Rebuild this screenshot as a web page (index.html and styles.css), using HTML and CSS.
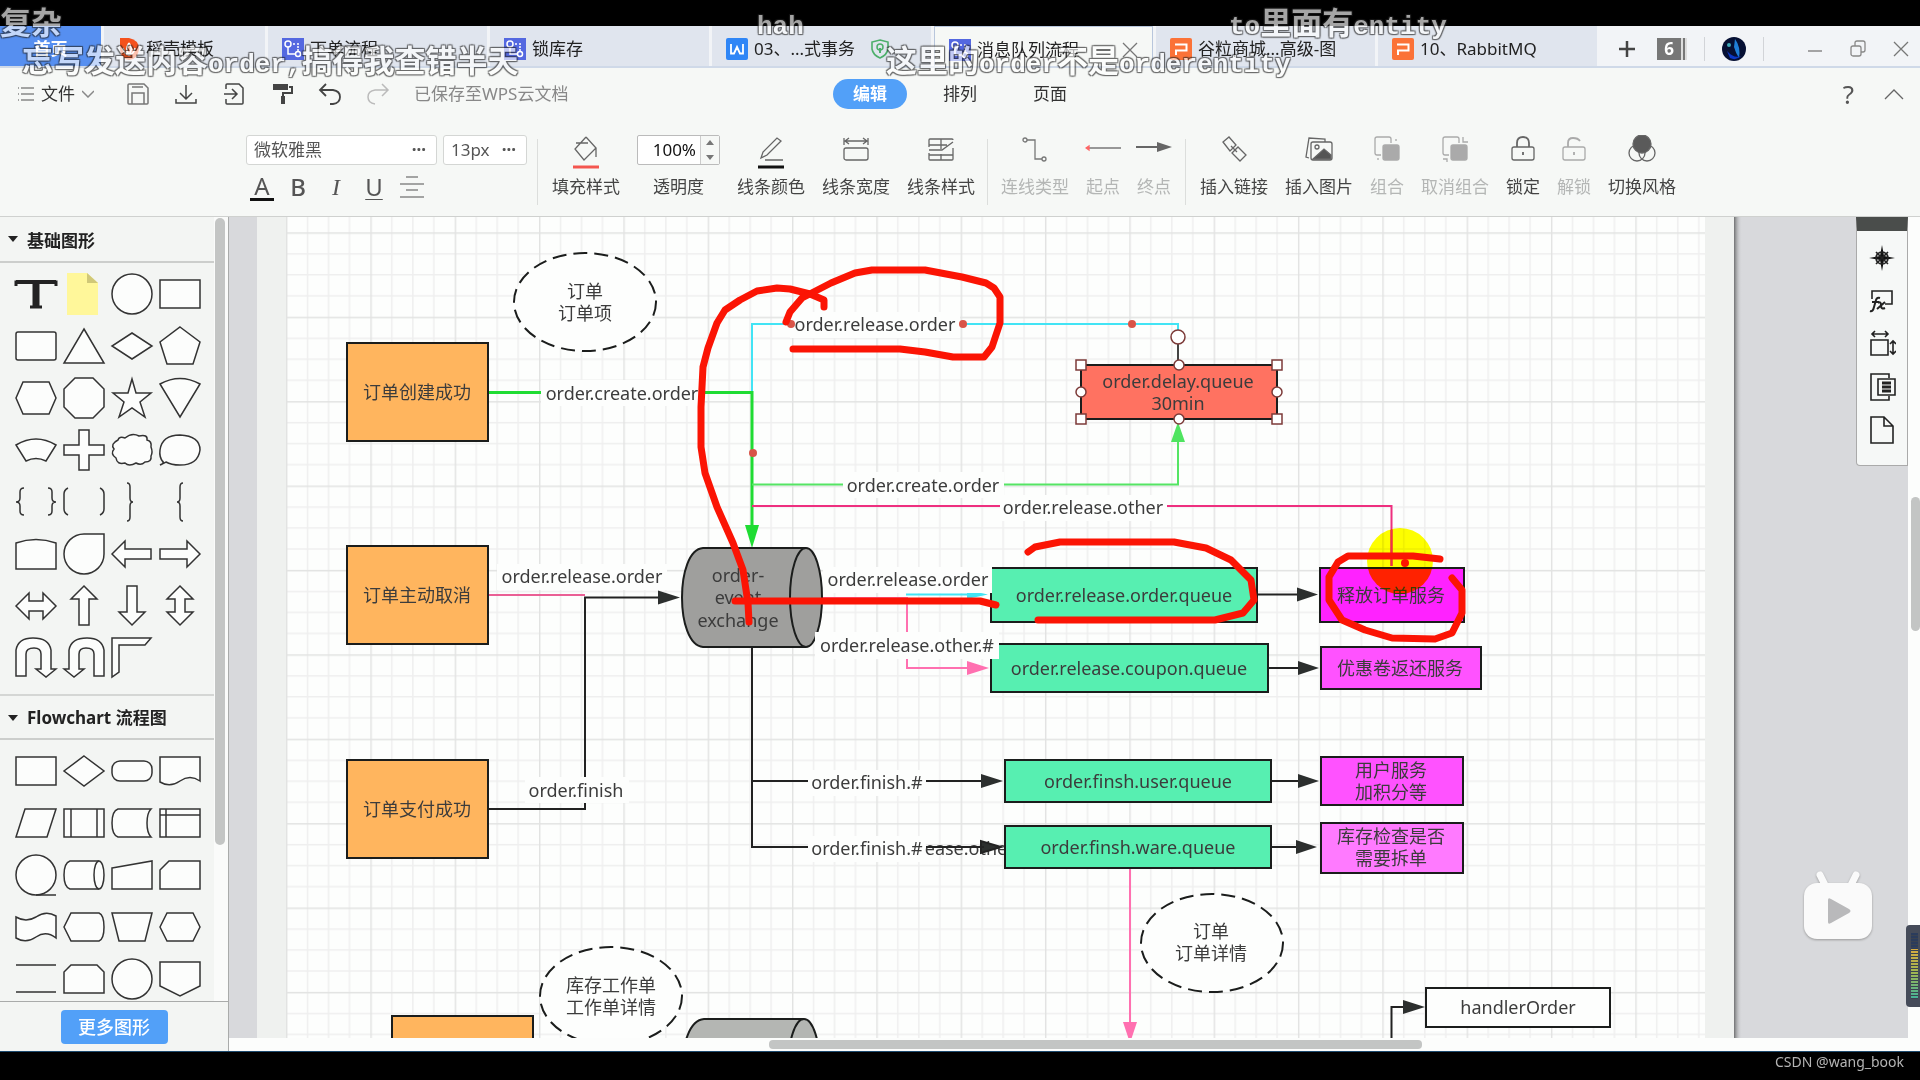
FILE: index.html
```html
<!DOCTYPE html>
<html lang="zh-CN">
<head>
<meta charset="utf-8">
<title>消息队列流程</title>
<link rel="stylesheet" href="styles.css">
</head>
<body>
<svg class="defs" aria-hidden="true">
  <symbol id="flow" viewBox="0 0 22 22"><rect width="22" height="22" fill="#5468e0"/><g fill="none" stroke="#fff" stroke-width="1.5"><circle cx="6" cy="6" r="3"/><circle cx="16" cy="16" r="2.5"/><path d="M6 9v7h7M11 6h2M15 6h2M16 8v2M16 11v2"/></g></symbol>
  <symbol id="ppt" viewBox="0 0 22 22"><rect width="22" height="22" rx="2" fill="#fb7237"/><path d="M5 6.500H16.500V12.500H6V17" fill="none" stroke="#fff" stroke-width="2"/></symbol>
</svg>

<div class="app">
  <nav class="tabs">
    <a href="#" class="tab home">首页</a>
    <a href="#" class="tab docer"><svg viewBox="0 0 22 22"><path d="M2 0H11Q21 2 21 11Q20 21 11 22Q2 20 2 11Z" fill="#f4511c"/><path d="M11 5C8 10 8 12 11 17C14 12 14 10 11 5M5 10C6 15 8 16 11 17C14 16 16 15 17 10" fill="none" stroke="#fff" stroke-width="1.600"/></svg>稻壳模板</a>
    <a href="#" class="tab"><svg><use href="#flow"/></svg>下单流程</a>
    <a href="#" class="tab"><svg><use href="#flow"/></svg>锁库存</a>
    <a href="#" class="tab"><svg viewBox="0 0 22 22"><rect width="22" height="22" rx="2" fill="#2f86f6"/><path d="M5 6V15.500H8L11 9L14 15.500H17V6" fill="none" stroke="#fff" stroke-width="1.800"/></svg>03、...式事务<svg class="shield" viewBox="0 0 18 20"><path d="M9 1L17 3V10Q16 16 9 19Q2 16 1 10V3Z" fill="none" stroke="#4caf6a" stroke-width="1.600"/><circle cx="9" cy="8" r="3" fill="none" stroke="#4caf6a" stroke-width="1.500"/><path d="M9 9V14" stroke="#4caf6a" stroke-width="2"/></svg></a>
    <a href="#" class="tab active"><svg><use href="#flow"/></svg>消息队列流程<svg class="close" viewBox="0 0 16 16"><path d="M1 1L15 15M15 1L1 15" stroke="#777" stroke-width="1.300"/></svg></a>
    <a href="#" class="tab"><svg><use href="#ppt"/></svg>谷粒商城...高级-图</a>
    <a href="#" class="tab"><svg><use href="#ppt"/></svg>10、RabbitMQ</a>
    <div class="winbar">
      <button aria-label="新建"><svg width="18" height="18" viewBox="0 0 18 18"><path d="M9 1V17M1 9H17" stroke="#444" stroke-width="2.500"/></svg></button>
      <span class="count">6</span>
      <i class="rule"></i>
      <svg width="24" height="24" viewBox="0 0 24 24"><circle cx="12" cy="12" r="12" fill="#061034"/><path d="M13 2Q19 10 17 21Q14 17 12 10Z" fill="#1f7fd8"/><path d="M5 14Q12 22 19 19Q14 24 8 21Z" fill="#0b37c8"/><circle cx="7" cy="8" r="2" fill="#3fa8b8"/></svg>
      <i class="rule"></i>
      <span class="controls">
        <button aria-label="最小化"><svg width="16" height="18" viewBox="0 0 16 18"><path d="M1 11H15" stroke="#888" stroke-width="1.500"/></svg></button>
        <button aria-label="还原"><svg width="16" height="18" viewBox="0 0 16 18" fill="none" stroke="#888" stroke-width="1.300"><rect x="1" y="6" width="10" height="10" rx="2"/><path d="M5 6V3Q5 1 7 1H13Q15 1 15 3V10Q15 12 13 12H11"/></svg></button>
        <button aria-label="关闭"><svg width="16" height="18" viewBox="0 0 16 18"><path d="M1 2L15 16M15 2L1 16" stroke="#777" stroke-width="1.300"/></svg></button>
      </span>
    </div>
  </nav>

  <div class="menu">
    <div class="quick">
      <button class="file"><svg width="16" height="16" viewBox="0 0 16 16"><path d="M0 2H1M3 2H16M0 8H1M3 8H16M0 14H1M3 14H16" stroke="#888" stroke-width="1.300"/></svg>文件<svg width="12" height="8" viewBox="0 0 12 8"><path d="M0 1L6 7L12 1" fill="none" stroke="#888"/></svg></button>
      <button aria-label="保存"><svg viewBox="0 0 24 24" stroke="#777"><path d="M2 3Q2 2 3 2H18L22 6V21Q22 22 21 22H3Q2 22 2 21ZM6 22V11H18V22M6 5H17"/></svg></button>
      <button aria-label="下载"><svg viewBox="0 0 24 24"><path d="M12 3V16M6 11L12 17L18 11M2 17V21H22V17"/></svg></button>
      <button aria-label="导出"><svg viewBox="0 0 24 24"><path d="M4 7V3Q4 2 5 2H17L21 6V21Q21 22 20 22H5Q4 22 4 21V17M2 12H15M10 7L15 12L10 17"/></svg></button>
      <button aria-label="格式刷"><svg viewBox="0 0 24 24"><path d="M3 5H18" stroke-width="6"/><path d="M19 5H22V11H13V22" stroke-width="2"/><path d="M13 14V22" stroke-width="4"/></svg></button>
      <button aria-label="撤销"><svg viewBox="0 0 24 24"><path d="M8 2L2 8L8 14M2 8H15Q22 9 22 15Q22 21 15 22H12" stroke-width="1.800"/></svg></button>
      <button aria-label="恢复"><svg viewBox="0 0 24 24" stroke="#bbb"><path d="M16 2L22 8L16 14M22 8H9Q2 9 2 15Q2 21 9 22"/></svg></button>
      <span class="saved">已保存至WPS云文档</span>
    </div>
    <div class="modes"><button class="on">编辑</button><button>排列</button><button>页面</button></div>
    <div class="help"><button aria-label="帮助">?</button><button aria-label="收起"><svg width="20" height="12" viewBox="0 0 20 12"><path d="M1 11L10 2L19 11" fill="none" stroke="#666" stroke-width="1.300"/></svg></button></div>
  </div>

  <div class="ribbon">
    <div class="fonts">
      <div class="pickers">
        <span class="pick wide"><select aria-label="字体"><option>微软雅黑</option></select></span>
        <span class="pick"><select aria-label="字号"><option>13px</option></select></span>
      </div>
      <div class="styles">
        <button class="colour">A</button><button class="bold">B</button><button class="ital">I</button><button class="under">U</button>
        <button aria-label="对齐"><svg width="24" height="24" viewBox="0 0 24 24"><path d="M6 2H18M0 9H24M6 15H18M0 22H24" stroke="#888" stroke-width="1.500"/></svg></button>
      </div>
    </div>
    <i class="bar"></i>
    <button class="tool"><svg viewBox="0 0 28 34"><path d="M14 2L3 14L12 25L24 13L14 2M4 8H16M24 13V22" /><path d="M1 32H27" stroke="#f4564f" stroke-width="3"/></svg>填充样式</button>
    <label class="tool"><span class="spin"><input type="text" value="100%"><span class="arrows"><svg width="8" height="20" viewBox="0 0 8 20"><path d="M0 5L4 0L8 5ZM0 15L4 20L8 15Z" fill="#777" stroke="none"/></svg></span></span>透明度</label>
    <button class="tool"><svg viewBox="0 0 28 34"><path d="M4 23L6 17L20 3L24 6L10 20ZM8 25H26"/><path d="M1 32H27" stroke="#111" stroke-width="3"/></svg>线条颜色</button>
    <button class="tool"><svg viewBox="0 0 28 34"><path d="M2 3V10M26 3V10M3 6H25M7 3L3 6L7 9M21 3L25 6L21 9"/><rect x="2" y="13" width="24" height="12" rx="2"/></svg>线条宽度</button>
    <button class="tool"><svg viewBox="0 0 28 34"><path d="M2 12V5Q2 4 3 4H25Q26 4 26 5M2 15H15L26 7M2 10H20M14 4V14M2 18V24Q2 25 3 25H25Q26 25 26 24V13M14 19V25M2 20H26"/></svg>线条样式</button>
    <i class="bar tight"></i>
    <button class="tool off"><svg viewBox="0 0 28 34"><g stroke="#777"><circle cx="4" cy="5" r="2"/><path d="M6 5H14V24H21"/><circle cx="23" cy="24" r="2"/></g></svg>连线类型</button>
    <button class="tool off"><svg class="long" viewBox="0 0 36 34"><path d="M2 13H36" stroke="#777" stroke-width="1.500"/><path d="M1 13L4 11V15Z" fill="#f66" stroke="#f66"/></svg>起点</button>
    <button class="tool off"><svg class="long" viewBox="0 0 36 34"><path d="M0 12H22" stroke="#666" stroke-width="2"/><path d="M21 7L36 12L21 17Z" fill="#666" stroke="none"/></svg>终点</button>
    <i class="bar"></i>
    <button class="tool"><svg viewBox="0 0 28 34"><path d="M3 7L9 2L16 10L10 16ZM12 18L18 12L26 20L20 26ZM11 11L17 17"/></svg>插入链接</button>
    <button class="tool"><svg viewBox="0 0 28 34"><path d="M4 23L1 22L4 3L20 4V7"/><rect x="6" y="7" width="21" height="18" rx="2"/><circle cx="12" cy="12" r="2"/><path d="M8 24L19 14L26 20V24Z" fill="#555"/></svg>插入图片</button>
    <button class="tool off"><svg viewBox="0 0 28 34"><path d="M8 20H4Q2 20 2 18V4Q2 2 4 2H16Q18 2 18 4V8"/><rect x="10" y="10" width="16" height="15" rx="2" fill="#aaa"/><path d="M23 4V6M5 23V25"/></svg>组合</button>
    <button class="tool off"><svg viewBox="0 0 28 34"><path d="M8 20H4Q2 20 2 18V4Q2 2 4 2H16Q18 2 18 4V8"/><rect x="10" y="10" width="16" height="15" rx="2" fill="#aaa"/><path d="M22 2V7H27M2 24H6V27"/></svg>取消组合</button>
    <button class="tool"><svg viewBox="0 0 28 34"><rect x="3" y="12" width="22" height="13" rx="2"/><path d="M8 12V8Q8 2 14 2Q20 2 20 8V12M14 17V20" stroke-width="1.800"/></svg>锁定</button>
    <button class="tool off"><svg viewBox="0 0 28 34"><rect x="3" y="12" width="22" height="13" rx="2"/><path d="M8 12V8Q8 3 13 3Q18 3 20 6M14 17V20" stroke-width="1.800"/></svg>解锁</button>
    <button class="tool"><svg viewBox="0 0 28 34"><circle cx="9" cy="18" r="8"/><circle cx="19" cy="18" r="8"/><circle cx="14" cy="9" r="9" fill="#5a5a5a"/></svg>切换风格</button>
  </div>

  <main class="work">
    <aside class="side">
      <div class="library">
        <div class="sections">
          <h2>基础图形</h2>
          <div class="shapes">
            <svg viewBox="0 0 44 44"><path d="M2 14V10H42V14M16 35H28" fill="none" stroke="#222" stroke-width="3"/><path d="M22 10V35" stroke="#222" stroke-width="7"/><path d="M2 10H42" stroke="#222" stroke-width="4"/></svg>
            <svg viewBox="0 0 44 44"><path d="M5 1H25L36 11V43H5Z" fill="#fff79a" stroke="none"/><path d="M25 1V11H36Z" fill="#d0c878" stroke="none"/></svg>
            <svg viewBox="0 0 44 44"><circle cx="22" cy="22" r="20"/></svg>
            <svg viewBox="0 0 44 44"><path d="M2 8H42V36H2Z"/></svg>
            <svg viewBox="0 0 44 44"><rect x="2" y="8" width="40" height="28" rx="2"/></svg>
            <svg viewBox="0 0 44 44"><path d="M22 5L42 39H2Z"/></svg>
            <svg viewBox="0 0 44 44"><path d="M22 9L42 22L22 35L2 22Z"/></svg>
            <svg viewBox="0 0 44 44"><path d="M22 3L42 18L35 40H9L2 18Z"/></svg>
            <svg viewBox="0 0 44 44"><path d="M9 6H35L42 22L35 38H9L2 22Z"/></svg>
            <svg viewBox="0 0 44 44"><path d="M13 2H31L42 13V31L31 42H13L2 31V13Z"/></svg>
            <svg viewBox="0 0 44 44"><path d="M22 3L26 17H41L30 26L35 41L22 32L9 41L14 26L3 17H18Z"/></svg>
            <svg viewBox="0 0 44 44"><path d="M2 8Q22 -3 42 8L22 41Z"/></svg>
            <svg viewBox="0 0 44 44"><path d="M2 17Q22 5 42 17L32 33Q22 28 12 33Z"/></svg>
            <svg viewBox="0 0 44 44"><path d="M17 2H27V17H42V27H27V42H17V27H2V17H17Z"/></svg>
            <svg viewBox="0 0 44 44"><path d="M8 12Q9 8 15 10Q22 4 29 8Q38 6 37 12Q42 13 41 19Q43 24 41 28Q42 34 35 34Q31 38 26 35Q19 39 15 35Q7 37 6 30Q0 26 4 21Q0 16 8 12Z"/></svg>
            <svg viewBox="0 0 44 44"><path d="M5 34Q1 29 2 22Q4 7 22 7Q42 8 42 22Q40 37 22 37Q13 37 8 34L2 37Q6 36 5 33"/></svg>
            <svg viewBox="0 0 44 44" class="open"><path d="M10 8Q6 8 6 12V18Q6 22 2 22Q6 22 6 26V31Q6 35 10 35M34 8Q38 8 38 12V18Q38 22 42 22Q38 22 38 26V31Q38 35 34 35"/></svg>
            <svg viewBox="0 0 44 44" class="open"><path d="M6 8Q2 10 2 14V29Q2 33 6 35M38 8Q42 10 42 14V29Q42 33 38 35"/></svg>
            <svg viewBox="0 0 44 44" class="open"><path d="M17 3Q20 3 20 7V18Q20 22 23 22Q20 22 20 26V37Q20 41 17 41"/></svg>
            <svg viewBox="0 0 44 44" class="open"><path d="M25 3Q22 3 22 7V18Q22 22 19 22Q22 22 22 26V37Q22 41 25 41"/></svg>
            <svg viewBox="0 0 44 44"><path d="M2 11Q22 4 42 11V37H2Z"/></svg>
            <svg viewBox="0 0 44 44"><path d="M22 2H42V22A20 20 0 1 1 22 2Z"/></svg>
            <svg viewBox="0 0 44 44"><path d="M2 22L15 9V17H41V27H15V35Z"/></svg>
            <svg viewBox="0 0 44 44"><path d="M42 22L29 9V17H2V27H29V35Z"/></svg>
            <svg viewBox="0 0 44 44"><path d="M2 22L15 9V17H29V9L42 22L29 35V27H15V35Z"/></svg>
            <svg viewBox="0 0 44 44"><path d="M22 2L35 15H27V41H17V15H9Z"/></svg>
            <svg viewBox="0 0 44 44"><path d="M22 41L35 28H27V2H17V28H9Z"/></svg>
            <svg viewBox="0 0 44 44"><path d="M22 2L35 15H27V28H35L22 41L9 28H17V15H9Z"/></svg>
            <svg viewBox="0 0 44 44"><path d="M2 40V14Q4 2 19 2Q35 2 37 14V33H42L32 41L22 33H27V18Q27 12 20 12Q12 12 12 18V40Z"/></svg>
            <svg viewBox="0 0 44 44"><path d="M42 40V14Q40 2 25 2Q9 2 7 14V33H2L12 41L22 33H17V18Q17 12 24 12Q32 12 32 18V40Z"/></svg>
            <svg viewBox="0 0 44 44"><path d="M2 41V2H41L35 9H9V36Z"/></svg>
          </div>
          <h2>Flowchart 流程图</h2>
          <div class="shapes">
            <svg viewBox="0 0 44 44"><path d="M2 8H42V36H2Z"/></svg>
            <svg viewBox="0 0 44 44"><path d="M22 7L42 22L22 37L2 22Z"/></svg>
            <svg viewBox="0 0 44 44"><rect x="2" y="12" width="40" height="20" rx="8"/></svg>
            <svg viewBox="0 0 44 44"><path d="M2 8H42V32Q32 25 22 32Q12 39 2 33Z"/></svg>
            <svg viewBox="0 0 44 44"><path d="M11 8H42L33 36H2Z"/></svg>
            <svg viewBox="0 0 44 44"><path d="M2 8H42V36H2ZM9 8V36M35 8V36"/></svg>
            <svg viewBox="0 0 44 44"><path d="M41 8H8Q2 10 2 22Q2 34 8 36H41Q37 32 37 22Q37 12 41 8Z"/></svg>
            <svg viewBox="0 0 44 44"><path d="M2 8H42V36H2ZM8 8V36M2 14H42"/></svg>
            <svg viewBox="0 0 44 44"><circle cx="22" cy="22" r="20"/><path d="M22 42H42"/></svg>
            <svg viewBox="0 0 44 44"><path d="M37 8H8Q2 10 2 22Q2 34 8 36H37"/><ellipse cx="37" cy="22" rx="5" ry="14"/></svg>
            <svg viewBox="0 0 44 44"><path d="M2 15L42 8V36H2Z"/></svg>
            <svg viewBox="0 0 44 44"><path d="M11 8H42V36H2V17Z"/></svg>
            <svg viewBox="0 0 44 44"><path d="M2 12Q12 18 22 12Q32 5 42 11V33Q32 25 22 32Q12 39 2 33Z"/></svg>
            <svg viewBox="0 0 44 44"><path d="M9 8H37Q42 10 42 22Q42 34 37 36H9L2 22Z"/></svg>
            <svg viewBox="0 0 44 44"><path d="M2 8H42L35 36H9Z"/></svg>
            <svg viewBox="0 0 44 44"><path d="M9 8H35L42 22L35 36H9L2 22Z"/></svg>
            <svg viewBox="0 0 44 44" class="open"><path d="M2 8H42M2 35H42"/></svg>
            <svg viewBox="0 0 44 44"><path d="M9 8H35L42 15V36H2V15Z"/></svg>
            <svg viewBox="0 0 44 44"><circle cx="22" cy="22" r="20"/></svg>
            <svg viewBox="0 0 44 44"><path d="M2 5H42V29L22 39L2 29Z"/></svg>
          </div>
        </div>
        <div class="vtrack"><i></i></div>
      </div>
      <div class="more"><button>更多图形</button></div>
    </aside>

    <section class="stage">
      <div class="view">
        <svg class="diagram">
          <defs>
            <pattern id="grid" x="286" y="232.300" width="84.330" height="84.400" patternUnits="userSpaceOnUse">
              <path d="M21.500 0V85M42.500 0V85M63.500 0V85M0 21.500H85M0 42.500H85M0 63.500H85" stroke="#efefef" stroke-width="1.500"/>
              <path d="M.7 0V85M0 .7H85" stroke="#e2e3e2" stroke-width="1.500"/>
            </pattern>
            <linearGradient id="edge"><stop offset="0" stop-color="#6f7071"/><stop offset="1" stop-color="#d8d9dc" stop-opacity="0"/></linearGradient>
          </defs>
          <g transform="translate(-229 -217)">
            <rect x="257" y="210" width="1477" height="900" fill="#eff1ef"/>
            <rect x="1734" y="210" width="8" height="900" fill="url(#edge)"/>
            <rect x="286" y="210" width="1419" height="900" fill="#fdfefd"/>
            <rect x="286" y="210" width="1419" height="900" fill="url(#grid)"/>

            <g class="wire">
              <path d="M752 392V324H1178V337" stroke="#42e4f5"/>
              <path d="M488 392.500H752V526" stroke="#1fdc33" stroke-width="3"/>
              <path d="M752 484.500H1178V440" stroke="#55e564"/>
              <path d="M752 506H1391.500V566" stroke="#ee2f7f"/>
              <path d="M488 595H585" stroke="#ea5f95"/>
              <path d="M488 809H585V597.500H660"/>
              <path d="M752 648V847H984M752 781H984"/>
              <path d="M822 598H907V668H968" stroke="#ff70b0"/>
              <path d="M906 594.500H970" stroke="#42e4f5"/>
              <path d="M1257 594.500H1300M1268 668H1300M1271 781H1300M1271 847H1300"/>
              <path d="M1130 869V1022" stroke="#ff70b0"/>
              <path d="M1391.500 1045V1007H1406"/>
              <path d="M1178 344V362" stroke="#444"/>
            </g>
            <g class="heads">
              <path d="M745 525H759L752 548Z" fill="#1fdc33"/>
              <path d="M1171 442H1185L1178 422Z" fill="#4fe460"/>
              <path d="M658 590.500V604.500L680 597.500Z"/>
              <path d="M967 590L988 594.500L967 599Z" fill="#42e4f5"/>
              <path d="M967 661V675L989 668Z" fill="#ff70b0"/>
              <path d="M981 774V788L1003 781ZM1297 587.500V601.500L1318 594.500ZM1298 661V675L1319 668ZM1298 774V788L1319 781ZM1296 840V854L1317 847ZM1403 1000V1014L1425 1007Z"/>
              <path d="M1123 1022H1137L1130 1043Z" fill="#ff70b0"/>
            </g>

            <g class="box">
              <g fill="#ffb55e"><rect x="347" y="343" width="141" height="98"/><rect x="347" y="546" width="141" height="98"/><rect x="347" y="760" width="141" height="98"/><rect x="392" y="1016" width="141" height="98"/></g>
              <g fill="#9f9f9d"><path d="M806 548H703C675 550 675 645 703 647H806"/><ellipse cx="806" cy="597.500" rx="16" ry="49.500"/></g>
              <g fill="#b4b6b3"><path d="M804 1019H704C675 1021 675 1116 704 1118H804"/><ellipse cx="804" cy="1068" rx="16" ry="49"/></g>
              <g fill="#fdfefd" stroke-dasharray="14 7"><ellipse cx="585" cy="302" rx="71" ry="49"/><ellipse cx="1212" cy="943" rx="71" ry="49"/><ellipse cx="611" cy="996" rx="71" ry="49"/></g>
              <g fill="#57efb1"><rect x="991" y="568" width="266" height="54"/><rect x="991" y="644" width="277" height="48"/><rect x="1005" y="760" width="266" height="42"/></g>
              <rect x="1320" y="568" width="144" height="54" fill="#ff22ff"/>
              <g fill="#ff52ff"><rect x="1321" y="647" width="160" height="42"/><rect x="1321" y="757" width="142" height="48"/></g>
              <rect x="1321" y="823" width="142" height="50" fill="#ff7aff"/>
              <rect x="1081" y="365" width="196" height="54" fill="#ff7261"/>
              <rect x="1426" y="988" width="184" height="39" fill="#fdfefd"/>
            </g>

            <g fill="#fdfefd">
              <rect x="541" y="380" width="162" height="26"/><rect x="790" y="312" width="170" height="26"/><rect x="843" y="472" width="161" height="26"/>
              <rect x="1000" y="495" width="167" height="26"/><rect x="497" y="564" width="170" height="26"/><rect x="823" y="567" width="169" height="26"/>
              <rect x="815" y="632" width="184" height="27"/><rect x="525" y="777" width="104" height="26"/><rect x="808" y="770" width="118" height="26"/><rect x="808" y="836" width="118" height="26"/>
            </g>
            <g class="label mid">
              <text x="585" y="298">订单</text><text x="585" y="320">订单项</text>
              <text x="417" y="399">订单创建成功</text><text x="417" y="602">订单主动取消</text><text x="417" y="816">订单支付成功</text>
              <text x="622" y="400">order.create.order</text><text x="875" y="331">order.release.order</text>
              <text x="1178" y="388">order.delay.queue</text><text x="1178" y="410">30min</text>
              <text x="923" y="492">order.create.order</text><text x="1083" y="514">order.release.other</text>
              <text x="582" y="583">order.release.order</text><text x="908" y="586">order.release.order</text>
              <text x="738" y="582">order-</text><text x="738" y="604">event</text><text x="738" y="627">exchange</text>
              <text x="1124" y="602">order.release.order.queue</text><text x="1129" y="675">order.release.coupon.queue</text>
              <text x="907" y="652">order.release.other.#</text><text x="576" y="797">order.finish</text>
              <text x="867" y="789">order.finish.#</text><text x="867" y="855">order.finish.#</text><text x="966" y="855">ease.othe</text>
              <text x="1391" y="602">释放订单服务</text><text x="1400" y="675">优惠卷返还服务</text>
              <text x="1391" y="777">用户服务</text><text x="1391" y="799">加积分等</text><text x="1391" y="843">库存检查是否</text><text x="1391" y="865">需要拆单</text>
              <text x="1211" y="938">订单</text><text x="1211" y="960">订单详情</text><text x="611" y="992">库存工作单</text><text x="611" y="1014">工作单详情</text>
              <text x="1518" y="1014">handlerOrder</text>
            </g>
            <path class="dark" d="M926 847H984M981 841V853L1001 847Z"/>
            <g class="box"><rect x="1005" y="826" width="266" height="42" fill="#57efb1"/></g>
            <g class="label mid"><text x="1138" y="788">order.finsh.user.queue</text><text x="1138" y="854">order.finsh.ware.queue</text></g>

            <g fill="#d95448"><circle cx="791" cy="324" r="4"/><circle cx="963" cy="324" r="4"/><circle cx="1132" cy="324" r="4"/><circle cx="753" cy="453" r="4"/></g>
            <g class="handle">
              <circle cx="1178" cy="337" r="7"/>
              <rect x="1076" y="360" width="10" height="10"/><rect x="1272" y="360" width="10" height="10"/><rect x="1076" y="414" width="10" height="10"/><rect x="1272" y="414" width="10" height="10"/>
              <circle cx="1179" cy="365" r="5"/><circle cx="1179" cy="419" r="5"/><circle cx="1081" cy="392" r="5"/><circle cx="1277" cy="392" r="5"/>
            </g>
            <circle class="spot" cx="1400" cy="561" r="33"/>
            <path d="M1391.500 530V566" stroke="#ee2f4f" stroke-width="2"/>
            <circle cx="1405" cy="563" r="4" fill="#ff1400"/>
            <g class="pen">
              <path d="M824 307V300L810 294L790 289L777 288L757 291L740 300L725 310L717 323L708 348L703 367L701 407V447L705 473L717 507L733 543L743 570L748 603L749 622"/>
              <path d="M786 322L790 312L802 298L831 283L855 273L872 270H925L962 277L986 283L994 288L1000 297V323L992 347L984 357H953L925 352L900 349H793"/>
              <path d="M735 601H980L996 605"/>
              <path d="M1028 552L1035 547L1060 542H1174L1206 548L1231 560L1251 580L1254 600L1243 613L1215 620H1038"/>
              <path d="M1440 559L1413 556H1348L1338 562L1329 577V600L1342 620L1365 630L1392 638L1435 639L1452 633L1462 613V590L1452 578"/>
            </g>
          </g>
        </svg>
        <div class="panel">
          <button aria-label="导航"><svg viewBox="0 0 28 28"><path d="M14 1L16 12L27 14L16 16L14 27L12 16L1 14L12 12Z" fill="#111" stroke="none"/><circle cx="14" cy="14" r="6"/><path d="M8 8L20 20M20 8L8 20"/></svg></button>
          <button aria-label="公式"><svg viewBox="0 0 28 28"><path d="M4 12V4H24V17H17"/><path d="M2 24Q5 25 6 20L8 13Q9 10 12 11M4 15H11M10 16Q13 14 13 18Q13 23 17 21M17 15L9 22" stroke-width="2"/></svg></button>
          <button aria-label="尺寸"><svg viewBox="0 0 28 28"><path d="M3 10H20V25H3ZM4 4H20M7 1L4 4L7 7M17 1L20 4L17 7M25 11V24M22 14L25 11L28 14M22 21L25 24L28 21"/></svg></button>
          <button aria-label="页面"><svg viewBox="0 0 28 28"><path d="M21 5V1H3V27H21V23M10 6H27V22H10Z"/><path d="M14 10H23M14 14H23M14 18H23" stroke-width="3"/></svg></button>
          <button aria-label="文档"><svg viewBox="0 0 28 28"><path d="M3 1H16L25 10V27H3ZM16 1V10H25"/></svg></button>
        </div>
        <svg class="tv" viewBox="0 0 72 72"><path d="M18 4L23 14M54 4L49 14" stroke="#fafafa" stroke-width="7" stroke-linecap="round"/><rect x="2" y="12" width="68" height="56" rx="13" fill="#fafafa"/><path d="M26 29Q26 26 29 28L47 38Q50 40 47 42L29 52Q26 54 26 51Z" fill="#b9b9bb"/></svg>
      </div>
      <div class="vscroll"><i></i></div>
      <div class="hscroll"><i></i></div>
    </section>
  </main>
</div>
<footer>CSDN @wang_book</footer>

<div class="meter"><i></i></div>
<div class="bullets">
  <span class="b1">复杂</span>
  <span class="b2"><b>hah</b></span>
  <span class="b3"><b>to</b>里面有<b>entity</b></span>
  <span class="b4">忘写发送内容<b>order,</b>搞得我查错半天</span>
  <span class="b5">这里的<b>order</b>不是<b>orderentity</b></span>
</div>
</body>
</html>
```
FILE: styles.css
```css
* { box-sizing: border-box; }
body {
  margin: 0;
  height: 100vh;
  padding-top: 26px;
  display: flex;
  flex-direction: column;
  position: relative;
  overflow: hidden;
  background: #000;
  color: #333;
  font: 17px/24px "Noto Sans", "Noto Sans CJK SC", sans-serif;
}
button, input, select { font: inherit; color: inherit; border: 0; padding: 0; background: none; }
button { display: flex; align-items: center; justify-content: center; }
.defs { position: absolute; width: 0; height: 0; }
.app { flex: 1; min-height: 0; display: flex; flex-direction: column; background: #f6f8f6; border-bottom: 1px solid #1d4a6e; }

/* document tabs */
.tabs { display: flex; height: 42px; flex: none; background: #f2f4f7; border-bottom: 2px solid #cfd9e8; }
.tab {
  flex: 0 1 219px;
  display: flex;
  align-items: center;
  gap: 6px;
  padding: 6px 14px 0;
  margin-right: 3px;
  background: #e0e5ee;
  color: #222;
  text-decoration: none;
  white-space: nowrap;
  min-width: 0;
}
.tab svg { width: 22px; height: 22px; flex: none; }
.tab.home { flex-basis: 101px; justify-content: center; background: #568ff0; color: #fff; font-weight: bold; }
.tab.docer { flex-basis: 161px; }
.tab .shield { width: 18px; height: 20px; margin-left: 10px; }
.tab .close { width: 16px; height: 16px; margin-left: auto; }
.tab.active { background: #f6f8f6; border: 1px solid #b8c6dc; border-bottom: 0; }
.winbar { flex: 1 0 320px; display: flex; align-items: center; gap: 15px; padding: 6px 11px 0 18px; }
.count { background: #777; color: #fff; font-weight: bold; width: 30px; height: 22px; line-height: 22px; text-align: center; border-right: 6px double #ddd; margin-left: 6px; }
.rule { width: 1px; height: 24px; background: #d2d4d8; }
.winbar .rule { margin: 0 2px; }
.controls { flex: 1; display: flex; justify-content: flex-end; gap: 27px; }

/* menu row */
.menu { height: 52px; flex: none; display: grid; grid-template-columns: 833px 1fr auto; align-items: center; padding-right: 16px; }
.quick { display: flex; align-items: center; gap: 24px; padding-left: 18px; }
.quick > button > svg:only-child { width: 24px; height: 24px; }
.quick button { fill: none; stroke: #444; stroke-width: 1.5; }
.quick .file { gap: 7px; margin-right: 8px; stroke: none; }
.saved { color: #888; }
.modes { display: flex; gap: 16px; align-items: center; }
.modes button { width: 74px; height: 30px; border-radius: 15px; }
.modes .on { background: #52a0f8; color: #fff; font-weight: bold; }
.help { display: flex; align-items: center; gap: 30px; }
.help button:first-child { font-size: 26px; color: #555; }

/* ribbon */
.ribbon { height: 97px; flex: none; display: flex; align-items: flex-start; gap: 17px; padding: 15px 0 0 246px; border-bottom: 1px solid #cfd1cf; white-space: nowrap; }
.fonts { width: 282px; display: flex; flex-direction: column; gap: 8px; margin-right: -5px; }
.pickers { display: flex; gap: 6px; }
.pick { position: relative; height: 30px; width: 84px; background: #fff; border: 1px solid #d4d6d4; border-radius: 3px; }
.pick.wide { width: 191px; }
.pick select { appearance: none; width: 100%; height: 28px; padding-left: 7px; color: #555; }
.pick::after { content: "···"; position: absolute; right: 10px; top: 2px; font-weight: bold; color: #555; }
.styles { display: flex; gap: 10px; align-items: center; padding-left: 4px; }
.styles button { width: 28px; height: 28px; font-size: 24px; color: #555; }
.styles .colour { width: 24px; border-bottom: 3px solid #111; }
.styles .bold { font-weight: 500; }
.styles .ital { font-family: "Liberation Serif", serif; font-style: italic; }
.styles .under { text-decoration: underline; text-decoration-thickness: 1px; text-underline-offset: 3px; }
.bar { width: 1px; height: 66px; margin: 4px -3px 0; background: #dcdedc; }
.bar.tight { margin: 4px -4px 0 -5px; }
.tool { display: flex; flex-direction: column; align-items: center; gap: 6px; color: #444; }
.tool svg { width: 28px; height: 34px; fill: none; }
.tool > svg { stroke: #666; stroke-width: 1.3; }
.tool .long { width: 36px; margin: 0 -1px; }
.tool.off { color: #b4b6b5; }
.tool.off > svg { stroke: #aaa; }
.spin { display: flex; width: 83px; height: 30px; margin-bottom: 4px; border: 1px solid #bbb; border-radius: 2px; background: #fff; }
.spin input { width: 62px; text-align: right; padding-right: 4px; color: #111; }
.spin .arrows { flex: 1; display: flex; align-items: center; justify-content: center; border-left: 1px solid #ccc; background: #f6f8f6; }
.spin .arrows svg { width: 8px; height: 20px; }

/* shape library */
.work { flex: 1; min-height: 0; display: flex; }
.side { width: 229px; flex: none; display: flex; flex-direction: column; background: #f3f5f3; border-right: 1px solid #a9abaa; }
.library { flex: 1; min-height: 0; display: flex; border-bottom: 1px solid #a9abaa; }
.sections { width: 214px; overflow: hidden; }
.sections h2 { margin: 0; height: 46px; padding: 2px 0 0 27px; font-size: 17px; line-height: 44px; color: #222; border-bottom: 2px solid #cccecc; position: relative; }
.sections h2::before { content: ""; position: absolute; left: 8px; top: 19px; border: 5px solid transparent; border-top: 6px solid #222; border-bottom: 0; }
.shapes { display: grid; grid-template-columns: repeat(4, 48px); grid-auto-rows: 52px; place-items: center; padding: 5px 0 10px 12px; }
.shapes + h2 { border-top: 2px solid #d4d6d4; line-height: 40px; }
.shapes svg { width: 44px; height: 44px; fill: #fcfdfc; stroke: #333; stroke-width: 1.5; }
.shapes .open { fill: none; }
.vtrack { flex: 1; background: #fafbfa; }
.vtrack i { display: block; width: 10px; height: 80%; max-height: 652px; margin: 1px; border-radius: 5px; background: #c3c5c4; }
.more { height: 49px; display: flex; justify-content: center; align-items: center; }
.more button { width: 107px; height: 34px; border-radius: 4px; background: #52a0f8; color: #fff; font-size: 18px; font-weight: 500; }

/* drawing stage */
.stage { flex: 1; min-width: 0; display: grid; grid-template: minmax(0, 1fr) 13px / minmax(0, 1fr) 12px; background: #fcfdfc; }
.view { position: relative; overflow: hidden; background: #d8d9dc; }
.diagram { display: block; width: 100%; height: 100%; }
.wire { fill: none; stroke: #222; stroke-width: 2; }
.heads { fill: #2c2f2e; }
.dark { fill: #2c2f2e; stroke: #222; stroke-width: 2; }
.box { stroke: #1b1d1c; stroke-width: 2; }
.label { font-size: 18px; fill: #3c3c3c; }
.mid { text-anchor: middle; }
.handle { fill: #fff; stroke: #7c3a38; stroke-width: 1.5; }
.spot { fill: #ff0; mix-blend-mode: multiply; }
.pen { fill: none; stroke: #fb1404; stroke-width: 7; stroke-linecap: round; stroke-linejoin: round; }
.panel { position: absolute; top: 0; right: 0; width: 52px; height: 249px; padding-top: 13px; display: flex; flex-direction: column; align-items: center; gap: 15px; background: #f6f8f7; border: 1px solid #aaa; border-top: 14px solid #4a4d4b; border-radius: 0 0 0 4px; }
.panel svg { width: 28px; height: 28px; fill: none; stroke: #222; stroke-width: 1.6; }
.tv { position: absolute; right: 34px; bottom: 95px; width: 72px; height: 72px; filter: drop-shadow(0 1px 1px #999); }
.vscroll i { display: block; width: 9px; height: 134px; margin: 280px 0 0 3px; border-radius: 5px; background: #c3c5c4; }
.hscroll i { display: block; width: 653px; height: 9px; margin: 2px 0 0 540px; border-radius: 4px; background: #c3c5c4; }

footer { height: 28px; flex: none; padding-right: 16px; text-align: right; color: #b4b4b4; font-size: 14px; line-height: 20px; }

/* overlays */
.meter { position: absolute; right: 0; bottom: 73px; width: 14px; height: 82px; padding: 8px 2px 8px 5px; border-radius: 4px 0 0 4px; background: #454b59; }
.meter i { display: block; height: 66px; background: repeating-linear-gradient(transparent 0 2px, #3a4250 2px 3px), linear-gradient(#2b3c5c 24%, #d9ab40 24%, #9fb552 60%, #43b39a); }
.bullets { opacity: .65; color: #fff; font: bold 31px/38px "Noto Sans CJK SC", sans-serif; text-shadow: 1px 1px 1px #222, -1px -1px 1px #222, 1px -1px 1px #222, -1px 1px 1px #222; }
.bullets span { position: absolute; top: 2px; white-space: pre; }
.bullets b { font: bold 26px/38px "Liberation Mono", monospace; }
.bullets .b1 { left: 0; }
.bullets .b2 { left: 757px; }
.bullets .b3 { left: 1229px; }
.bullets .b4 { left: 22px; top: 40px; }
.bullets .b5 { left: 886px; top: 40px; }
```
